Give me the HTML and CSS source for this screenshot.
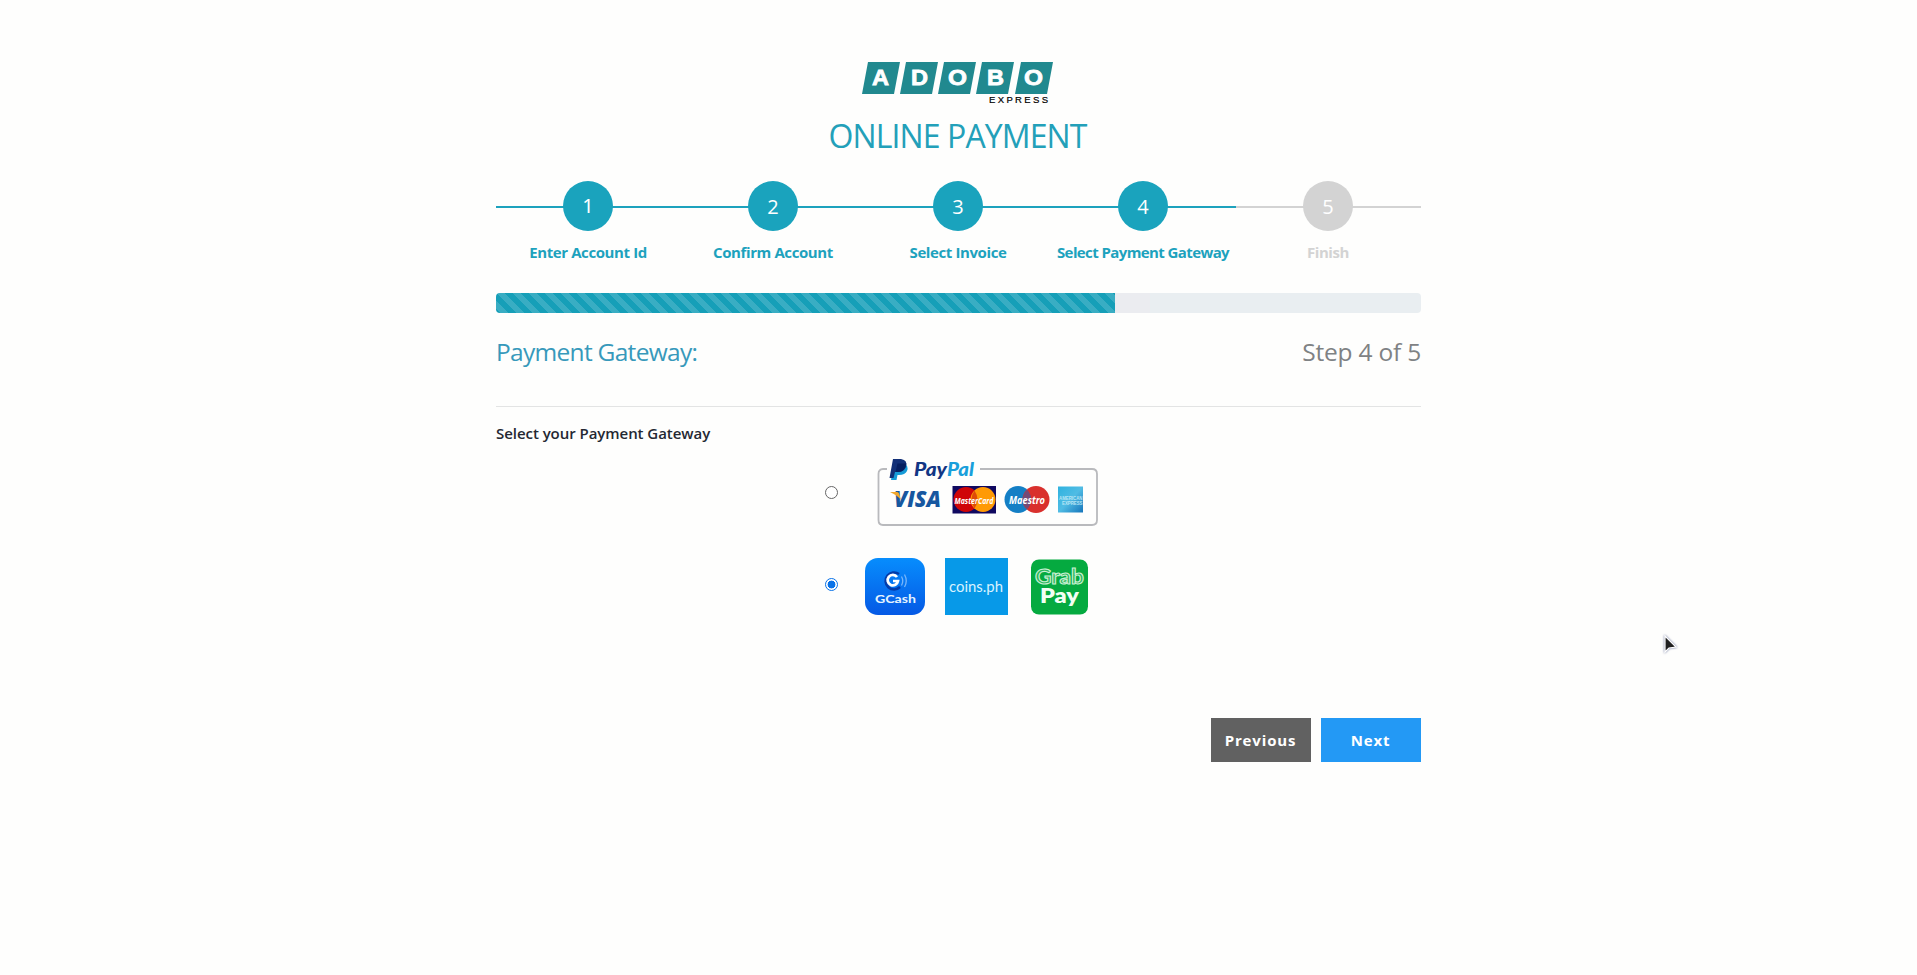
FILE: index.html
```html
<!DOCTYPE html>
<html lang="en">
<head>
<meta charset="utf-8">
<title>Adobo Express Online Payment</title>
<link rel="stylesheet" href="styles.css">
</head>
<body>
<main class="wizard">
  <header class="brand">
    <svg class="logo" width="192" height="42" viewBox="0 0 192 42">
      <g fill="#21898f">
        <path d="M6 0H38L32 32H0Z"/><path d="M44 0H76L70 32H38Z"/><path d="M82 0H114L108 32H76Z"/><path d="M120 0H152L146 32H114Z"/><path d="M159 0H191L185 32H153Z"/>
      </g>
      <g class="logo-letters">
        <text x="10" y="23" textLength="17" lengthAdjust="spacingAndGlyphs">A</text>
        <text x="49" y="23" textLength="17" lengthAdjust="spacingAndGlyphs">D</text>
        <text x="86" y="23" textLength="19" lengthAdjust="spacingAndGlyphs">O</text>
        <text x="125" y="23" textLength="17" lengthAdjust="spacingAndGlyphs">B</text>
        <text x="162" y="23" textLength="19" lengthAdjust="spacingAndGlyphs">O</text>
      </g>
      <text class="logo-sub" x="127" y="41" textLength="59">EXPRESS</text>
    </svg>
    <h1 class="title">ONLINE PAYMENT</h1>
  </header>
  <ol class="steps">
    <li class="step done"><span class="dot first">1</span><span class="step-name">Enter Account Id</span></li>
    <li class="step done"><span class="dot">2</span><span class="step-name">Confirm Account</span></li>
    <li class="step done"><span class="dot">3</span><span class="step-name">Select Invoice</span></li>
    <li class="step done"><span class="dot">4</span><span class="step-name wide">Select Payment Gateway</span></li>
    <li class="step"><span class="dot">5</span><span class="step-name">Finish</span></li>
  </ol>
  <div class="progress"><div class="progress-fill"></div><div class="progress-trail"></div></div>
  <div class="heading-row"><h2 class="heading">Payment Gateway:</h2><h2 class="count">Step 4 of 5</h2></div>
  <div class="rule"></div>
  <p class="prompt">Select your Payment Gateway</p>
  <div class="options">
    <label class="option paypal">
      <span class="radio"></span>
      <svg class="paypal-art" width="222" height="70" viewBox="0 0 222 70">
        <defs><linearGradient id="amex" x2="1" y2="1"><stop stop-color="#2fb2df"/><stop offset=".5" stop-color="#50bce4"/><stop offset="1" stop-color="#1675bb"/></linearGradient></defs>
        <path d="M10 10H6Q1.500 10 1.500 15V61Q1.500 66 6 66H215Q220 66 220 61V15Q220 10 215 10H103" fill="none" stroke="#b9babd" stroke-width="1.800"/>
        <path d="M17 4H27Q32 7 30 12Q28 16 22 16H20.500L19.500 21H14Z" fill="#159bd7"/>
        <path d="M16 0H24Q31 1 29 8Q27 13 21 13H18L16.500 19H12.500Z" fill="#123077"/>
        <path d="M20.500 4.500H29.300Q28 13 21 13H18.500Z" fill="#061f60"/>
        <text class="pp" x="37" y="17" textLength="33" lengthAdjust="spacingAndGlyphs" fill="#123684">Pay</text>
        <text class="pp" x="70" y="17" textLength="27" lengthAdjust="spacingAndGlyphs" fill="#189fdb">Pal</text>
        <text class="visa" x="17" y="48" textLength="47" lengthAdjust="spacingAndGlyphs">VISA</text>
        <path d="M13 33H20Q22 33 22.500 36L24 41Q20 36 13 33Z" fill="#f1a72d"/>
        <path d="M75.500 27H119V54.500H75.500Z" fill="#100960"/>
        <circle cx="89" cy="40.500" r="12.500" fill="#cf0508"/><circle cx="106" cy="40.500" r="12.500" fill="#ff9a05"/>
        <path d="M97.500 31.500Q91.500 40.500 97.500 49.500Q103.500 40.500 97.500 31.500Z" fill="#df4b08"/>
        <text class="card-name" x="77.500" y="44.500" textLength="39" lengthAdjust="spacingAndGlyphs">MasterCard</text>
        <circle cx="141" cy="40.500" r="13.500" fill="#147fc5"/><circle cx="159" cy="40.500" r="13.500" fill="#d9302d"/>
        <path d="M150 30.500Q141.500 40.500 150 50.500Q158.500 40.500 150 30.500Z" fill="#754a76"/>
        <text class="maestro" x="132" y="44.500" textLength="36" lengthAdjust="spacingAndGlyphs">Maestro</text>
        <path d="M181 27.500H206V53.500H181Z" fill="url(#amex)"/>
        <text class="amex" x="182" y="40.500" textLength="23.500" lengthAdjust="spacingAndGlyphs">AMERICAN</text>
        <text class="amex" x="185" y="46" textLength="20.500" lengthAdjust="spacingAndGlyphs">EXPRESS</text>
      </svg>
    </label>
    <label class="option wallets">
      <span class="radio checked"></span>
      <svg class="wallet-art" width="224" height="58" viewBox="0 0 224 58">
        <defs><linearGradient id="gcash" x2="0" y2="1"><stop stop-color="#078dfd"/><stop offset="1" stop-color="#0559e5"/></linearGradient></defs>
        <rect width="60" height="57" rx="13" fill="url(#gcash)"/>
        <path d="M34 16A8.500 8.500 0 1 0 35 29" fill="none" stroke="#043ba9" stroke-width="2.500"/>
        <path d="M32 19A5.200 5.200 0 1 0 33 23H28" fill="none" stroke="#fff" stroke-width="2.700"/>
        <path d="M36.500 18.500Q39 23 36.500 27.500M39.500 16.500Q43 23 39.500 29" fill="none" stroke="#78b6fa" stroke-width="1.300"/>
        <text class="gcash" x="10" y="44.500" textLength="41" lengthAdjust="spacingAndGlyphs">GCash</text>
        <path d="M80 0H143V57H80Z" fill="#0799e8"/>
        <text class="coins" x="84" y="34" textLength="54" lengthAdjust="spacingAndGlyphs">coins.ph</text>
        <rect x="166" y="1.500" width="57" height="55" rx="8" fill="#05aa40"/>
        <text class="grab" x="170" y="26" textLength="49" lengthAdjust="spacingAndGlyphs">Grab</text>
        <text class="grabpay" x="175" y="44.500" textLength="39" lengthAdjust="spacingAndGlyphs">Pay</text>
      </svg>
    </label>
  </div>
  <div class="actions"><button class="btn previous">Previous</button><button class="btn next">Next</button></div>
</main>
<svg class="cursor" width="18" height="22" viewBox="0 0 18 22"><path d="M2 1V17L6 13L13 12Z" fill="#202020" stroke="#fff" stroke-width="1.200"/></svg>
</body>
</html>
```
FILE: styles.css
```css
* { box-sizing: border-box; }
body { margin: 0; height: 975px; overflow: hidden; background: #fefefd; font-family: "Open Sans", "Noto Sans", sans-serif; }
.wizard { width: 925px; margin-left: 496px; padding-top: 62px; display: flex; flex-direction: column; }
.brand { height: 119px; display: flex; flex-direction: column; align-items: center; padding-right: 2px; }
.logo { display: block; flex: none; }
.logo-letters { font: 900 22px "Liberation Sans", sans-serif; fill: #fff; stroke: #fff; stroke-width: .8; }
.logo-sub { font: 9.500px "Liberation Sans", sans-serif; fill: #000; stroke: #000; stroke-width: .2; }
.title { margin: 10px 0 0; font-size: 32px; line-height: 44px; font-weight: 400; color: #23a0b9; letter-spacing: -.9px; white-space: nowrap; }
.steps { display: grid; grid-template-columns: repeat(5, 185px); height: 112px; margin: 0; padding: 0; list-style: none; color: #d3d3d3; }
.step { display: flex; flex-direction: column; align-items: center; padding-right: 1px; background: linear-gradient(#d3d3d3, #d3d3d3) 0 25px / 100% 2px no-repeat; }
.done { color: #1da2bd; background-image: linear-gradient(#1da2bd, #1da2bd); }
.dot { width: 50px; height: 50px; border-radius: 50%; background: #d3d3d3; color: #fff; font-size: 20px; line-height: 52px; text-align: center; }
.done .dot { background: #1aa3bd; }
.dot.first { font-family: "Noto Sans", sans-serif; line-height: 49px; }
.step-name { margin-top: 10px; font-size: 15px; line-height: 22px; font-weight: 700; letter-spacing: -.4px; white-space: nowrap; }
.step-name.wide { letter-spacing: -.6px; }
.progress { display: flex; height: 20px; border-radius: 4px; overflow: hidden; background: #e9eef1; }
.progress-fill { width: 619px; background: linear-gradient(45deg, rgba(255,255,255,.15) 25%, transparent 25%, transparent 50%, rgba(255,255,255,.15) 50%, rgba(255,255,255,.15) 75%, transparent 75%) 0 0 / 16px 16px #169fb8; }
.progress-trail { width: 35px; background: #ebecf0; }
.heading-row { display: flex; justify-content: space-between; height: 93px; padding-top: 21px; }
.heading, .count { margin: 0; font-size: 24.500px; line-height: 36px; font-weight: 400; white-space: nowrap; }
.heading { color: #3799bb; letter-spacing: -.7px; }
.count { color: #7f8284; letter-spacing: -.2px; }
.rule { height: 1px; background: #e3e4e4; }
.prompt { margin: 15px 0 0; font-size: 15px; line-height: 22px; font-weight: 600; color: #242832; letter-spacing: -.05px; white-space: nowrap; }
.options { margin-top: 15px; padding-left: 329px; display: flex; flex-direction: column; }
.option { display: flex; align-items: flex-start; }
.paypal { height: 99px; }
.radio { width: 13px; height: 13px; margin-top: 27px; flex: none; border: 1px solid #666; border-radius: 50%; background: #fff; }
.radio.checked { margin-top: 20px; border-color: #0872e8; background: radial-gradient(circle, #0872e8 0 3.700px, #fff 4.200px); }
.paypal-art { margin-left: 39px; }
.wallet-art { margin-left: 27px; }
.pp { font: italic 900 18px Lato, sans-serif; }
.visa { font: italic 800 22px "Open Sans", sans-serif; fill: #17579f; }
.card-name { font: italic 700 9px "Open Sans", sans-serif; fill: #fff; }
.maestro { font: italic 700 10px "Open Sans", sans-serif; fill: #fff; }
.amex { font: 700 5px "Liberation Sans", sans-serif; fill: #b8e5f5; }
.gcash { font: 700 11px Lato, sans-serif; fill: #e5f4ff; }
.coins { font: 400 16px Lato, sans-serif; fill: #d9f3ff; }
.grab { font: 700 21px Lato, sans-serif; fill: #2cb55c; stroke: #c9f0d2; stroke-width: 1.100; }
.grabpay { font: 800 21px Lato, sans-serif; fill: #f2fff4; }
.actions { display: flex; justify-content: flex-end; gap: 10px; margin-top: 102px; }
.btn { width: 100px; height: 44px; border: 0; padding: 0 1px 0 0; color: #fff; font: 700 15px "Open Sans", sans-serif; letter-spacing: .85px; }
.previous { background: #616161; }
.next { background: #2399f5; }
.cursor { position: absolute; left: 1663px; top: 635px; filter: drop-shadow(0 0 1px #667099); }
```
